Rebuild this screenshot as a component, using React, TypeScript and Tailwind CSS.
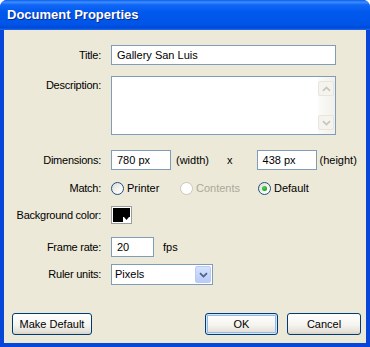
import type { ReactNode } from 'react';

function Label({ children, top = false }: { children: ReactNode; top?: boolean }) {
  return (
    <div className={`w-[98px] shrink-0 pr-[1px] text-right tracking-[-0.25px] ${top ? 'self-start pt-[1px]' : ''}`}>
      {children}
    </div>
  );
}

function Field({ className, children }: { className: string; children?: ReactNode }) {
  return (
    <div className={`flex h-[20px] items-center border border-[#7F9DB9] bg-white px-[5px] ${className}`}>
      {children}
    </div>
  );
}

function Chevron({ up = false, color }: { up?: boolean; color: string }) {
  return (
    <svg width="9" height="6" viewBox="0 0 9 6" className={up ? 'rotate-180' : ''}>
      <path d="M1 1.2 L4.5 4.6 L8 1.2" fill="none" stroke={color} strokeWidth="1.8" />
    </svg>
  );
}

function Radio({ checked = false, disabled = false, label }: { checked?: boolean; disabled?: boolean; label: string }) {
  return (
    <div className={`flex items-center ${disabled ? 'text-[#ACA899]' : ''}`}>
      <div
        className={`flex h-[13px] w-[13px] items-center justify-center rounded-full border ${
          disabled
            ? 'border-[#CAC8BB] bg-white'
            : 'border-[#1C5180] bg-[linear-gradient(135deg,#DCDBD5,#F6F6F3_60%,#FFFFFF)]'
        }`}
      >
        {checked ? (
          <div className="h-[5px] w-[5px] rounded-full bg-[radial-gradient(circle_at_40%_35%,#55D451,#21A121_70%)]" />
        ) : null}
      </div>
      <span className="ml-[3px]">{label}</span>
    </div>
  );
}

function Button({ children, className, primary = false }: { children: ReactNode; className: string; primary?: boolean }) {
  return (
    <button
      type="button"
      className={`flex h-[22px] items-center justify-center rounded-[3px] border border-[#003C74] bg-[linear-gradient(to_bottom,#FFFFFF,#F5F4EF_55%,#E3E0D6_90%,#D6D0C5)] text-black ${
        primary ? 'shadow-[inset_0_0_0_1px_#CEE7FF,inset_0_0_0_2px_#98B8EA]' : ''
      } ${className}`}
    >
      {children}
    </button>
  );
}

export default function App() {
  return (
    <div className="flex h-[347px] w-[370px] flex-col overflow-hidden rounded-t-[7px] bg-[#0846D9] font-['Liberation_Sans',Arial,sans-serif] text-[11px] text-black">
      <div className="flex h-[30px] shrink-0 items-center bg-[linear-gradient(to_bottom,#0A5DEB_0%,#3E8DFF_7%,#1268F5_16%,#0058EE_40%,#0055E8_80%,#0049D8_93%,#1E6BF0_100%)] pl-[7px]">
        <span className="text-[13px] font-bold text-white [text-shadow:1px_1px_0_#0A2C8C]">
          Document Properties
        </span>
      </div>

      <div className="mx-[4px] mb-[4px] flex flex-1 flex-col bg-[#ECE9D8] pt-[15px]">
        <div className="flex items-center">
          <Label>Title:</Label>
          <Field className="ml-[9px] w-[225px]">Gallery San Luis</Field>
        </div>

        <div className="mt-[11px] flex">
          <Label top>Description:</Label>
          <div className="ml-[9px] flex h-[59px] w-[225px] border border-[#7F9DB9] bg-white">
            <div className="flex-1" />
            <div className="flex w-[17px] flex-col justify-between bg-[linear-gradient(to_right,#FBFBF9,#F1F0EA)] py-[4px] pr-[1px]">
              <div className="flex h-[15px] w-[16px] items-center justify-center rounded-[2px] border border-[#E8E6DC] bg-[#F4F3EE]">
                <Chevron up color="#C9C7BA" />
              </div>
              <div className="flex h-[15px] w-[16px] items-center justify-center rounded-[2px] border border-[#E8E6DC] bg-[#F4F3EE]">
                <Chevron color="#C9C7BA" />
              </div>
            </div>
          </div>
        </div>

        <div className="mt-[15px] flex items-center">
          <Label>Dimensions:</Label>
          <Field className="ml-[9px] w-[60px]">780 px</Field>
          <span className="ml-[5px]">(width)</span>
          <span className="ml-[18px]">x</span>
          <Field className="ml-[24px] w-[60px]">438 px</Field>
          <span className="ml-[3px]">(height)</span>
        </div>

        <div className="mt-[9px] flex h-[18px] items-center">
          <Label>Match:</Label>
          <div className="ml-[9px] w-[69px]">
            <Radio label="Printer" />
          </div>
          <div className="w-[78px]">
            <Radio disabled label="Contents" />
          </div>
          <Radio checked label="Default" />
        </div>

        <div className="mt-[8px] flex h-[20px] items-center">
          <Label>Background color:</Label>
          <div className="relative ml-[9px] h-[18px] w-[21px] border border-[#9D9D9D] bg-white p-[1px]">
            <div className="h-full w-full bg-black" />
            <div className="absolute bottom-[1px] right-[1px] flex h-[5px] w-[7px] items-start justify-center bg-white">
              <svg width="5" height="3" viewBox="0 0 5 3">
                <path d="M0 0 H5 L2.5 3 Z" fill="#000" />
              </svg>
            </div>
          </div>
        </div>

        <div className="mt-[12px] flex items-center">
          <Label>Frame rate:</Label>
          <Field className="ml-[9px] w-[43px]">20</Field>
          <span className="ml-[9px]">fps</span>
        </div>

        <div className="mt-[7px] flex items-center">
          <Label>Ruler units:</Label>
          <div className="ml-[9px] flex h-[21px] w-[102px] items-center border border-[#7F9DB9] bg-white pl-[3px] pr-[1px]">
            <span className="flex-1">Pixels</span>
            <div className="flex h-[17px] w-[16px] items-center justify-center rounded-[2px] border border-[#B9CCF5] bg-[linear-gradient(to_bottom,#D5E1FD,#B8CBF8)]">
              <Chevron color="#4D6185" />
            </div>
          </div>
        </div>

        <div className="mt-[28px] flex items-center pl-[8px] pr-[5px]">
          <Button className="w-[80px]">Make Default</Button>
          <div className="flex-1" />
          <Button primary className="w-[73px]">
            OK
          </Button>
          <Button className="ml-[9px] w-[74px]">Cancel</Button>
        </div>
      </div>
    </div>
  );
}
